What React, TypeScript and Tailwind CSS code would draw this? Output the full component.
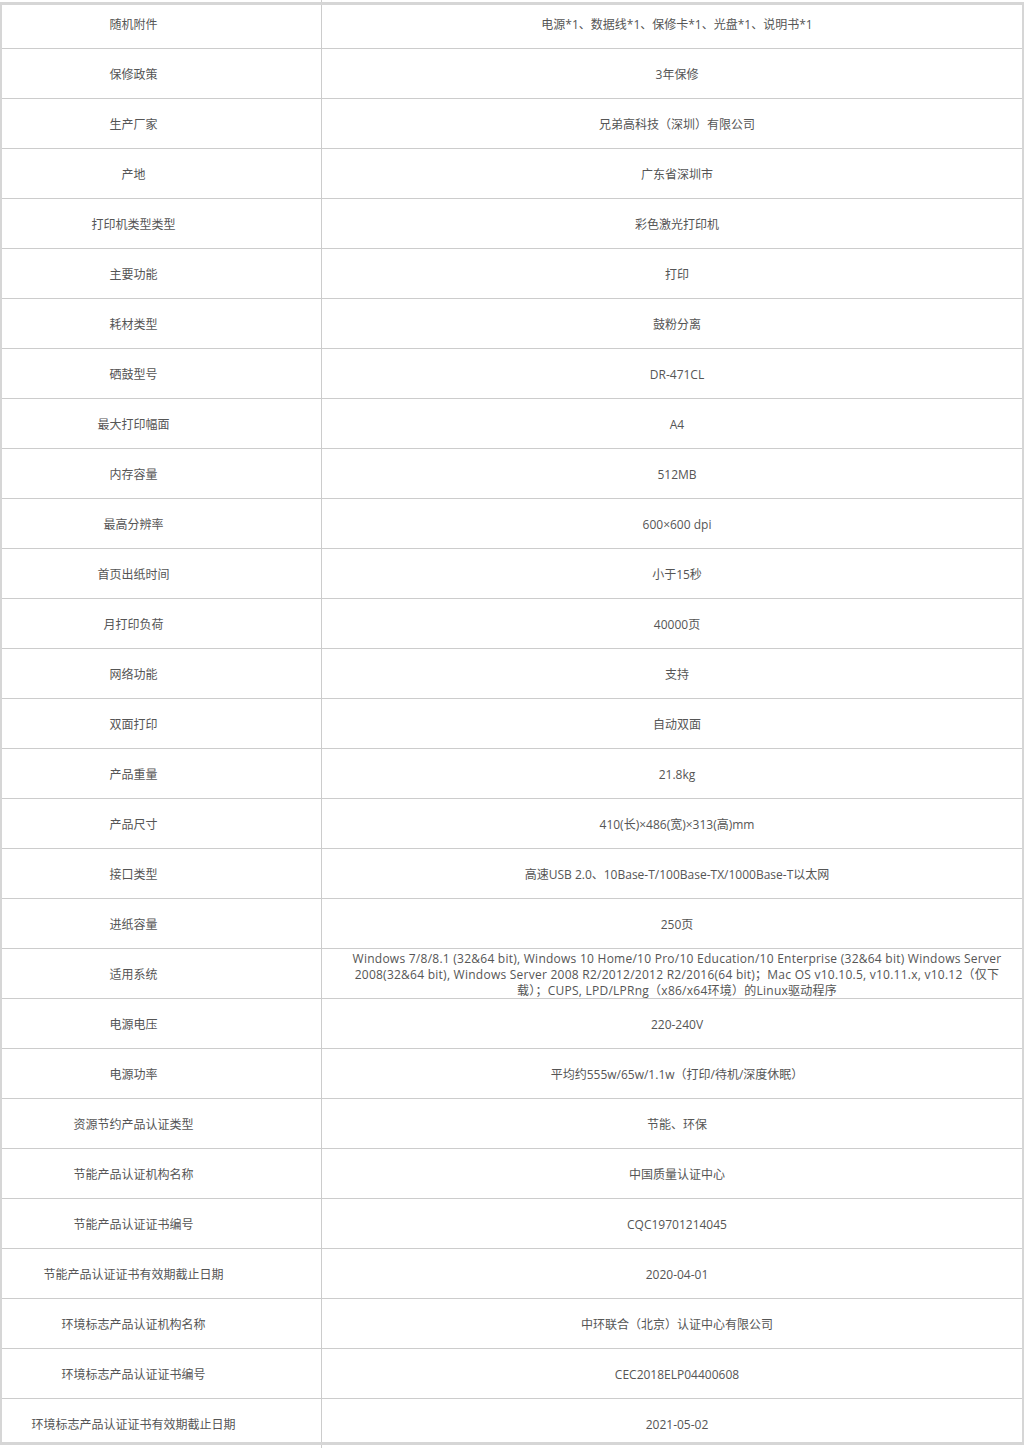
const rows: [string, string][] = [
  ["随机附件", "电源*1、数据线*1、保修卡*1、光盘*1、说明书*1"],
  ["保修政策", "3年保修"],
  ["生产厂家", "兄弟高科技（深圳）有限公司"],
  ["产地", "广东省深圳市"],
  ["打印机类型类型", "彩色激光打印机"],
  ["主要功能", "打印"],
  ["耗材类型", "鼓粉分离"],
  ["硒鼓型号", "DR-471CL"],
  ["最大打印幅面", "A4"],
  ["内存容量", "512MB"],
  ["最高分辨率", "600×600 dpi"],
  ["首页出纸时间", "小于15秒"],
  ["月打印负荷", "40000页"],
  ["网络功能", "支持"],
  ["双面打印", "自动双面"],
  ["产品重量", "21.8kg"],
  ["产品尺寸", "410(长)×486(宽)×313(高)mm"],
  ["接口类型", "高速USB 2.0、10Base-T/100Base-TX/1000Base-T以太网"],
  ["进纸容量", "250页"],
  ["适用系统", "__OS__"],
  ["电源电压", "220-240V"],
  ["电源功率", "平均约555w/65w/1.1w（打印/待机/深度休眠）"],
  ["资源节约产品认证类型", "节能、环保"],
  ["节能产品认证机构名称", "中国质量认证中心"],
  ["节能产品认证证书编号", "CQC19701214045"],
  ["节能产品认证证书有效期截止日期", "2020-04-01"],
  ["环境标志产品认证机构名称", "中环联合（北京）认证中心有限公司"],
  ["环境标志产品认证证书编号", "CEC2018ELP04400608"],
  ["环境标志产品认证证书有效期截止日期", "2021-05-02"],
];

function OsText() {
  return (
    <div className="text-center leading-[16px] whitespace-nowrap tracking-[0.25px]">
      Windows 7/8/8.1 (32&amp;64 bit), Windows 10 Home/10 Pro/10 Education/10 Enterprise (32&amp;64 bit) Windows Server
      <br />
      2008(32&amp;64 bit), Windows Server 2008 R2/2012/2012 R2/2016(64 bit)；Mac OS v10.10.5, v10.11.x, v10.12（仅下
      <br />
      载）；CUPS, LPD/LPRng（x86/x64环境）的Linux驱动程序
    </div>
  );
}

function Strip({ h }: { h: string }) {
  return (
    <div className={`flex ${h}`}>
      <div className="w-[321px]" />
      <div className="w-px bg-[#cccccc]" />
    </div>
  );
}

export default function App() {
  const last = rows.length - 1;
  return (
    <div
      className="w-[1024px] h-[1448px] bg-white text-[12px] text-[#555555]"
      style={{ fontFamily: '"Open Sans", "Noto Sans CJK SC", sans-serif' }}
    >
      <Strip h="h-[2px]" />
      <div className="border-x-2 border-y-[3px] border-[#d6d6d6]">
        {rows.map(([k, v], i) => {
          const first = i === 0;
          const end = i === last;
          const h = first || end ? "h-[43px]" : "h-[49px]";
          const pad = first ? "pb-[3px]" : end ? "pt-[9px]" : "pt-[2px]";
          return (
            <div
              key={k}
              className={`grid grid-cols-[320px_1fr] ${end ? "" : "border-b border-[#cccccc]"}`}
            >
              <div className={`${h} ${pad} border-r border-[#cccccc] flex items-center justify-center pr-[56px]`}>
                {k}
              </div>
              <div className={`${h} ${pad} flex items-center justify-center pl-[10px]`}>
                {v === "__OS__" ? <OsText /> : v}
              </div>
            </div>
          );
        })}
      </div>
      <Strip h="h-[3px]" />
    </div>
  );
}
